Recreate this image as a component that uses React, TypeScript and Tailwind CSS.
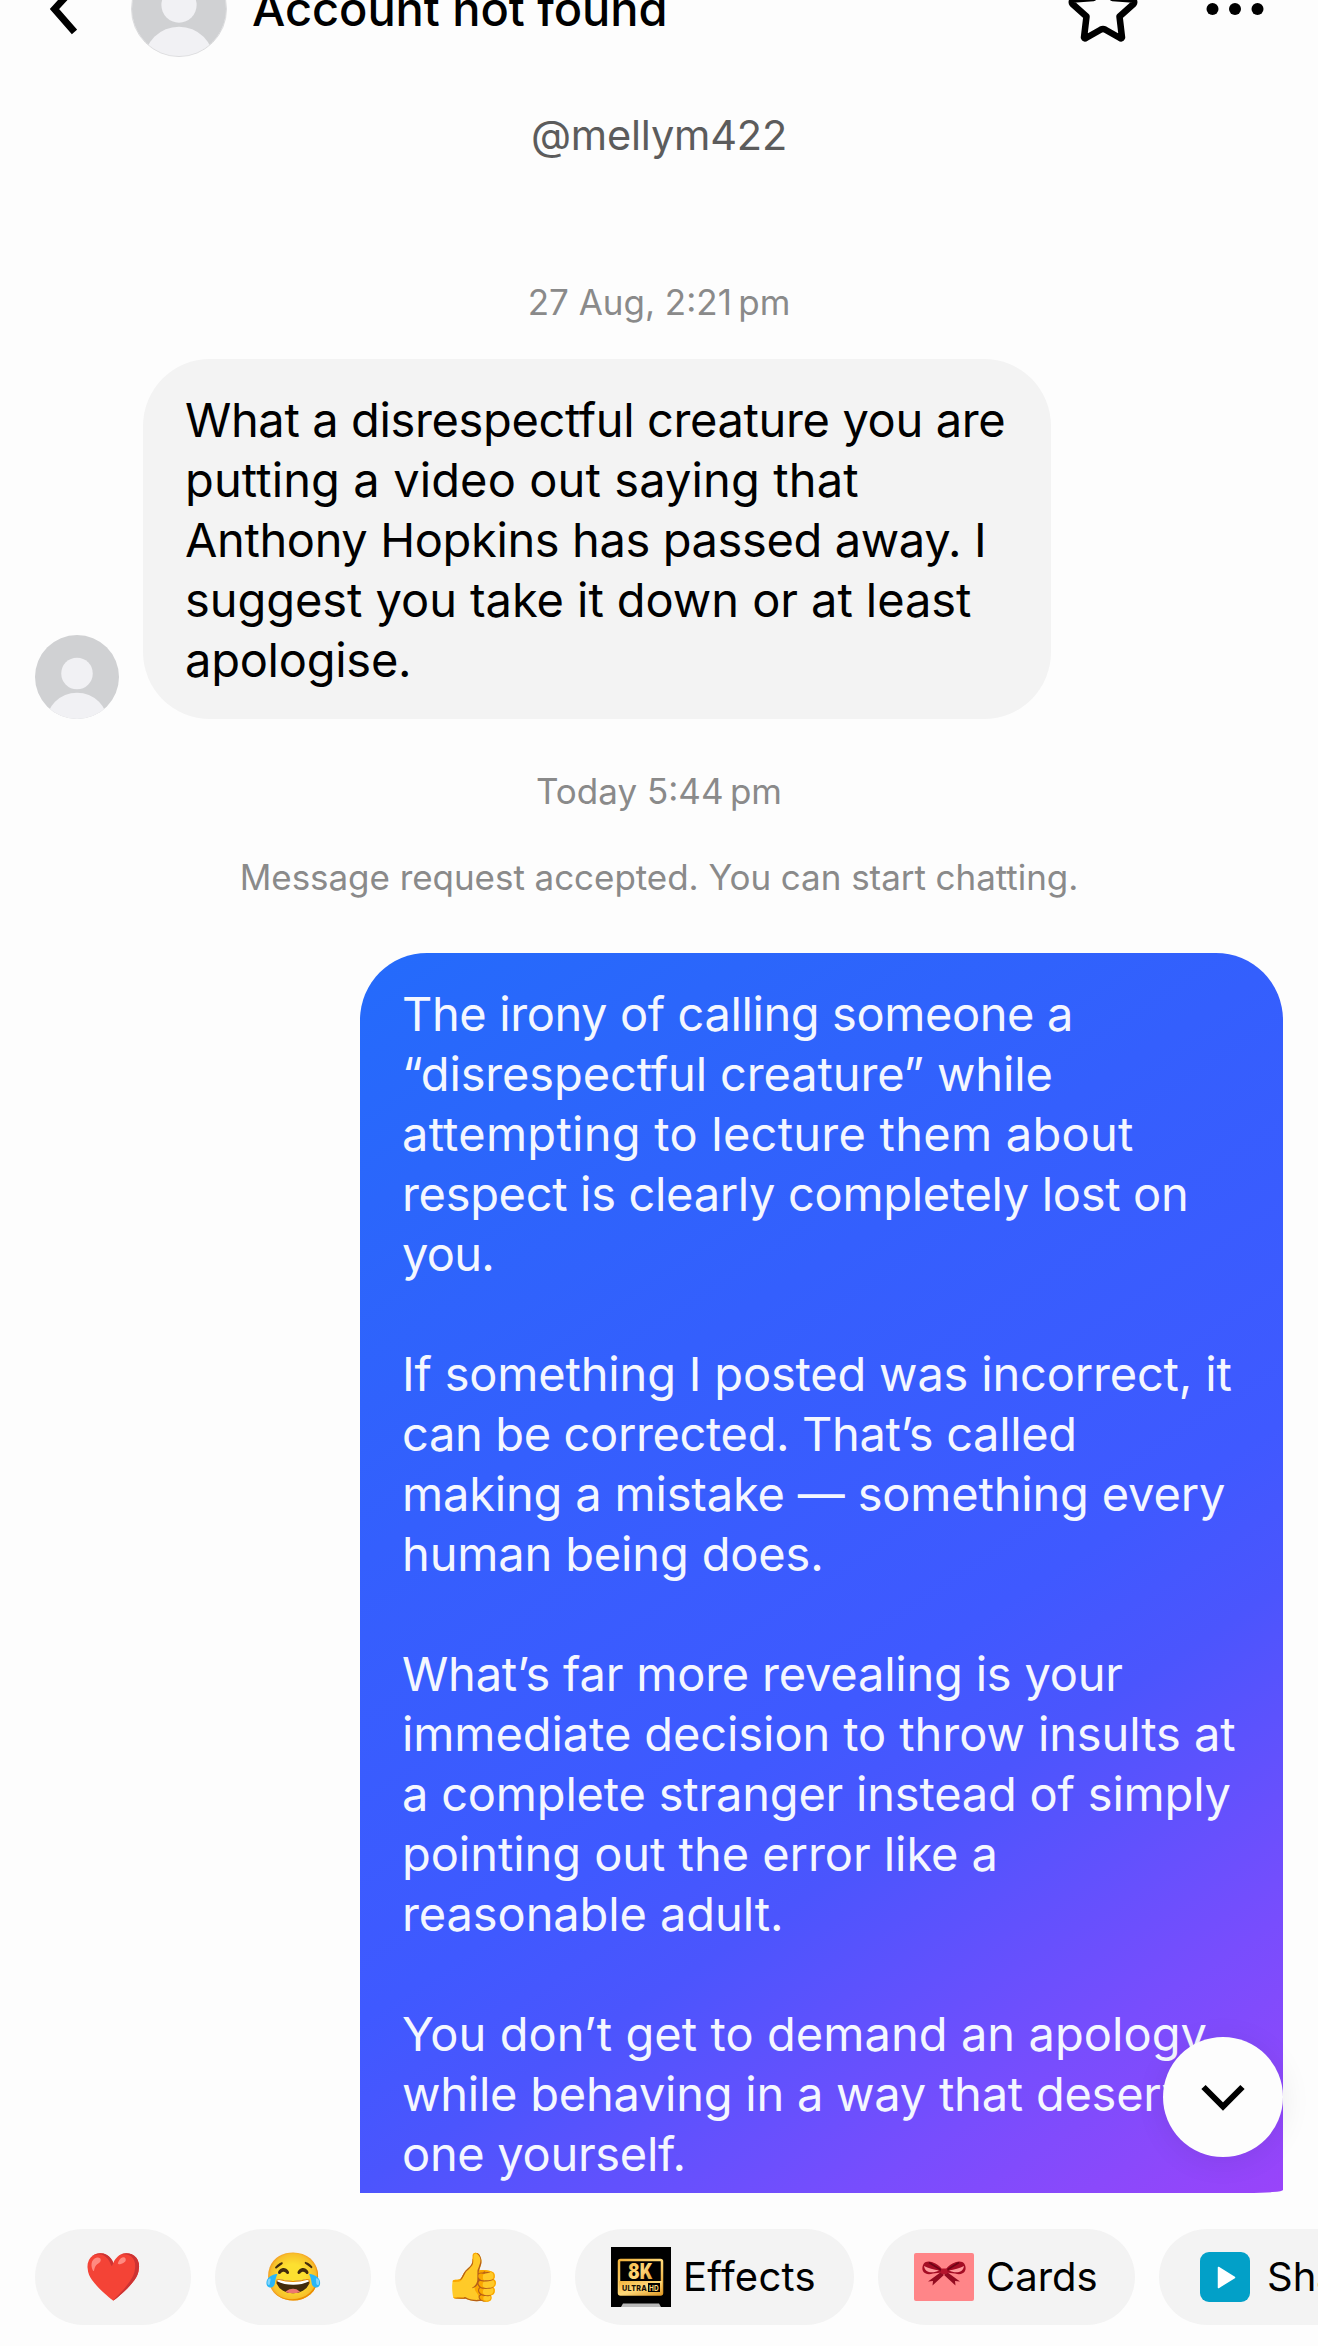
import React from 'react';

interface TextLine {
    text: string;
    tracking?: string;
}

const incoming: TextLine[] = [
    { text: 'What a disrespectful creature you are', tracking: 'tracking-[-0.37px]' },
    { text: 'putting a video out saying that', tracking: 'tracking-[0.12px]' },
    { text: 'Anthony Hopkins has passed away. I', tracking: 'tracking-[-0.38px]' },
    { text: 'suggest you take it down or at least', tracking: 'tracking-[-0.06px]' },
    { text: 'apologise.', tracking: 'tracking-[-0.25px]' },
];

const outgoing: TextLine[][] = [
    [
        { text: 'The irony of calling someone a', tracking: 'tracking-[-0.4px]' },
        { text: '“disrespectful creature” while', tracking: 'tracking-[-0.13px]' },
        { text: 'attempting to lecture them about', tracking: 'tracking-[0.25px]' },
        { text: 'respect is clearly completely lost on', tracking: 'tracking-[-0.33px]' },
        { text: 'you.', tracking: 'tracking-[-0.7px]' },
    ],
    [
        { text: 'If something I posted was incorrect, it', tracking: 'tracking-[-0.18px]' },
        { text: 'can be corrected. That’s called', tracking: 'tracking-[-0.36px]' },
        { text: 'making a mistake — something every', tracking: 'tracking-[-0.18px]' },
        { text: 'human being does.', tracking: 'tracking-[-0.15px]' },
    ],
    [
        { text: 'What’s far more revealing is your', tracking: 'tracking-[-0.21px]' },
        { text: 'immediate decision to throw insults at', tracking: 'tracking-[-0.09px]' },
        { text: 'a complete stranger instead of simply', tracking: 'tracking-[-0.2px]' },
        { text: 'pointing out the error like a', tracking: 'tracking-[-0.05px]' },
        { text: 'reasonable adult.', tracking: 'tracking-[-0.1px]' },
    ],
    [
        { text: 'You don’t get to demand an apology', tracking: 'tracking-[0.06px]' },
        { text: 'while behaving in a way that deserves', tracking: 'tracking-[-0.24px]' },
        { text: 'one yourself.', tracking: 'tracking-[-0.3px]' },
    ],
];

const reactions = ['❤️', '😂', '👍'];

const Lines: React.FC<{ lines: TextLine[] }> = ({ lines }) => (
    <p>
        {lines.map(line => (
            <span key={line.text} className={`block whitespace-nowrap ${line.tracking ?? ''}`}>{line.text}</span>
        ))}
    </p>
);

const Avatar: React.FC<{ className?: string }> = ({ className }) => (
    <svg viewBox="0 0 96 96" className={`shrink-0 rounded-full ${className ?? ''}`}>
        <rect width="96" height="96" fill="#d0d1d3" />
        <circle cx="48" cy="44" r="18" fill="#f1f1f4" />
        <circle cx="48" cy="101.5" r="35.5" fill="#f1f1f4" />
    </svg>
);

const BackIcon = () => (
    <svg viewBox="0 0 40 60" className="h-[60px] w-10" fill="none" stroke="#000" strokeWidth="7">
        <path d="M39.500 6 17.500 30l20 23" />
    </svg>
);

const StarIcon = () => (
    <svg viewBox="0 0 80 84" className="h-[84px] w-20" fill="none" stroke="#000" strokeWidth="6.5" strokeLinejoin="round">
        <path d="M40 12 49.500 31 70 32.500Q72 35 70.500 37L56.500 49.500 59 70.500Q58.500 72 57 71L42 62.500Q40 61.500 38 62.500L23 71Q21.500 72 21 70.500L23.500 49.500 9.500 37Q8 35 10 32.500L30.500 31Z" />
    </svg>
);

const MoreIcon = () => (
    <svg viewBox="0 0 60 20" className="h-5 w-[60px]">
        <circle cx="7.500" cy="10" r="6" />
        <circle cx="30" cy="10" r="6" />
        <circle cx="52.500" cy="10" r="6" />
    </svg>
);

const EightKIcon = () => (
    <svg viewBox="0 0 60 60" className="h-[60px] w-[60px]">
        <defs>
            <linearGradient id="gold" x1="0" y1="0" x2="1" y2="1">
                <stop offset="0" stopColor="#f0b23c" />
                <stop offset="0.5" stopColor="#ffd97a" />
                <stop offset="1" stopColor="#e09a26" />
            </linearGradient>
        </defs>
        <rect width="60" height="60" fill="#000" />
        <path d="M12 56.500H48L50 60H10Z" fill="#b8b8b8" />
        <rect x="8" y="13" width="43" height="34.500" rx="1.500" fill="none" stroke="url(#gold)" strokeWidth="2.500" />
        <rect x="8" y="34" width="43" height="14" fill="url(#gold)" />
        <text x="29.500" y="32" textAnchor="middle" fontFamily="Inter, sans-serif" fontSize="21" fontWeight="900" fill="url(#gold)" textLength="25" lengthAdjust="spacingAndGlyphs">8K</text>
        <text x="11" y="43.500" fontFamily="Inter, sans-serif" fontSize="8" fontWeight="800" fill="#1a1205" textLength="25" lengthAdjust="spacingAndGlyphs">ULTRA</text>
        <rect x="37" y="36" width="12" height="9" fill="#000" />
        <text x="38" y="43.500" fontFamily="Inter, sans-serif" fontSize="8" fontWeight="700" fill="#ffd97a" textLength="10" lengthAdjust="spacingAndGlyphs">HD</text>
    </svg>
);

const BowIcon = () => (
    <svg viewBox="0 0 60 48" className="h-12 w-[60px]">
        <rect width="60" height="48" rx="2" fill="#ff8588" />
        <path d="M27 19 14 28.500 19 28 18.500 32.500 31 21Z M33 19 46 28.500 41 28 41.500 32.500 29 21Z" fill="#930b20" />
        <path d="M28 16C22 9 13 6 9.500 11C6 18 11 23 19 20.500L28 19.500Z M32 16C38 9 47 6 50.500 11C54 18 49 23 41 20.500L32 19.500Z" fill="#a40d24" />
        <path d="M10 13C14 15 20 17 25 17.500C20 20 11 21 10 13Z M50 13C46 15 40 17 35 17.500C40 20 49 21 50 13Z" fill="#ff9a9c" />
        <path d="M15 9.500 27 17 M45 9.500 33 17" stroke="#6d0415" strokeWidth="1.500" />
        <rect x="27" y="15.500" width="6.500" height="5.500" rx="1.500" fill="#b5152c" />
    </svg>
);

const PlayIcon = () => (
    <svg viewBox="0 0 50 50" className="h-[50px] w-[50px]">
        <rect width="50" height="50" rx="9" fill="#02a0c8" />
        <path d="M18.500 15.500 34.500 25.500 18.500 35.500Z" fill="#fff" stroke="#fff" strokeWidth="1.500" strokeLinejoin="round" />
    </svg>
);

const App: React.FC = () => {
    return (
        <div className="relative flex h-[2346px] w-[1318px] flex-col overflow-hidden bg-[#fdfdfd] font-['Inter','Noto_Sans',sans-serif] text-black">
            <header className="-mt-[45px] flex h-[108px] shrink-0 items-center pl-[37px] pr-[53px]">
                <BackIcon />
                <Avatar className="ml-[54px] h-24 w-24 border border-[#dcdcde]" />
                <h1 className="ml-[25px] text-[47px] leading-[60px] font-medium tracking-[-0.05px] whitespace-nowrap">Account not found</h1>
                <div className="ml-auto flex items-center gap-[62px]">
                    <StarIcon />
                    <MoreIcon />
                </div>
            </header>

            <main className="flex min-h-0 flex-1 flex-col overflow-hidden">
                <p className="mt-[47px] text-center text-[41.5px] leading-[50px] tracking-[-0.2px] text-[#5c5c5c]">@mellym422</p>
                <p className="mt-[121px] text-center text-[35px] leading-[42px] text-[#8a8a8a]">27 Aug, 2:21{'\u2009'}pm</p>

                <div className="mt-9 flex shrink-0 items-end gap-6 pl-[35px]">
                    <Avatar className="h-[84px] w-[84px]" />
                    <div className="h-[360px] w-[908px] rounded-[67px] bg-[#f3f3f3] pt-[31px] pl-[42px] text-[47px] leading-[60px]">
                        <Lines lines={incoming} />
                    </div>
                </div>

                <p className="mt-[51px] text-center text-[35px] leading-[42px] text-[#8a8a8a]">Today 5:44{'\u2009'}pm</p>
                <p className="mt-11 text-center text-[35px] leading-[42px] tracking-[-0.05px] text-[#8a8a8a]">Message request accepted. You can start chatting.</p>

                <div className="mt-[55px] mr-[35px] flex h-[1240px] w-[923px] shrink-0 flex-col gap-[60px] self-end rounded-t-[67px] rounded-br-[36px_3px] bg-[linear-gradient(147deg,#246bfb_0%,#2b66fb_14%,#345ffd_33%,#3f59ff_58%,#4b55fd_67%,#784dfd_85%,#8a49fb_93%,#9944fa_100%)] pt-[31px] pl-[42px] text-[47px] leading-[60px] text-[#f4f7ff]">
                    {outgoing.map((lines, i) => <Lines key={i} lines={lines} />)}
                </div>
            </main>

            <footer className="flex h-[153px] shrink-0 gap-6 pt-9 pl-[35px] text-[40px]">
                {reactions.map(emoji => (
                    <button key={emoji} className="flex h-24 w-[156px] shrink-0 items-center justify-center rounded-full bg-[#f3f3f3] pb-1 text-[47px] leading-none">
                        {emoji}
                    </button>
                ))}
                <button className="flex h-24 w-[279px] shrink-0 items-center gap-3 rounded-full bg-[#f3f3f3] pl-9 tracking-[0.3px]">
                    <EightKIcon />
                    Effects
                </button>
                <button className="flex h-24 w-[257px] shrink-0 items-center gap-3 rounded-full bg-[#f3f3f3] pl-9">
                    <BowIcon />
                    Cards
                </button>
                <button className="flex h-24 w-[257px] shrink-0 items-center gap-[17px] rounded-full bg-[#f3f3f3] pl-[41px]">
                    <PlayIcon />
                    Share
                </button>
            </footer>

            {/* scroll to latest message */}
            <button className="absolute top-[2037px] left-[1163px] flex h-[120px] w-[120px] items-center justify-center rounded-full bg-[#fdfdfd] shadow-[0_4px_30px_rgba(0,0,0,0.08)]">
                <svg viewBox="0 0 44 30" className="h-[30px] w-11" fill="none" stroke="#000" strokeWidth="6">
                    <path d="M2.500 5 22 24.500 41.500 5" />
                </svg>
            </button>
        </div>
    );
};

export default App;
